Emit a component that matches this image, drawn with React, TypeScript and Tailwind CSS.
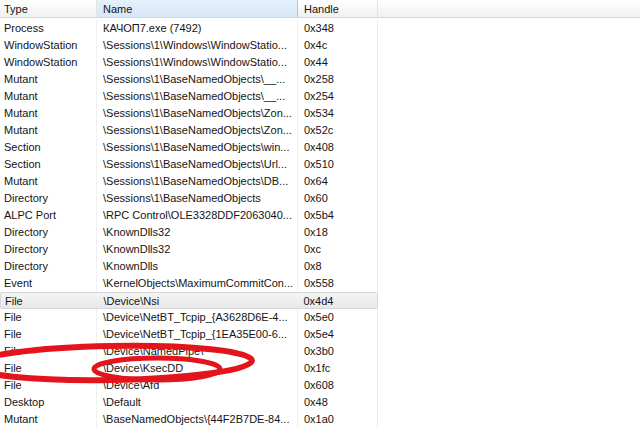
import React from "react";

const rows: [string, string, string][] = [
  ["Process", "КАЧОП7.exe (7492)", "0x348"],
  ["WindowStation", "\\Sessions\\1\\Windows\\WindowStatio...", "0x4c"],
  ["WindowStation", "\\Sessions\\1\\Windows\\WindowStatio...", "0x44"],
  ["Mutant", "\\Sessions\\1\\BaseNamedObjects\\__...", "0x258"],
  ["Mutant", "\\Sessions\\1\\BaseNamedObjects\\__...", "0x254"],
  ["Mutant", "\\Sessions\\1\\BaseNamedObjects\\Zon...", "0x534"],
  ["Mutant", "\\Sessions\\1\\BaseNamedObjects\\Zon...", "0x52c"],
  ["Section", "\\Sessions\\1\\BaseNamedObjects\\win...", "0x408"],
  ["Section", "\\Sessions\\1\\BaseNamedObjects\\Url...", "0x510"],
  ["Mutant", "\\Sessions\\1\\BaseNamedObjects\\DB...", "0x64"],
  ["Directory", "\\Sessions\\1\\BaseNamedObjects", "0x60"],
  ["ALPC Port", "\\RPC Control\\OLE3328DDF2063040...", "0x5b4"],
  ["Directory", "\\KnownDlls32", "0x18"],
  ["Directory", "\\KnownDlls32", "0xc"],
  ["Directory", "\\KnownDlls", "0x8"],
  ["Event", "\\KernelObjects\\MaximumCommitCon...", "0x558"],
  ["File", "\\Device\\Nsi", "0x4d4"],
  ["File", "\\Device\\NetBT_Tcpip_{A3628D6E-4...", "0x5e0"],
  ["File", "\\Device\\NetBT_Tcpip_{1EA35E00-6...", "0x5e4"],
  ["File", "\\Device\\NamedPipe\\", "0x3b0"],
  ["File", "\\Device\\KsecDD", "0x1fc"],
  ["File", "\\Device\\Afd", "0x608"],
  ["Desktop", "\\Default", "0x48"],
  ["Mutant", "\\BaseNamedObjects\\{44F2B7DE-84...", "0x1a0"],
];

export default function App() {
  return (
    <div className="relative w-[640px] h-[429px] overflow-hidden bg-white text-[11px] text-[#141414] font-['Liberation_Sans',Arial,sans-serif]">
      {/* column header */}
      <div className="flex h-[18px] border-b border-[#d5d5d5] bg-gradient-to-b from-white to-[#eff0f2]">
        <div className="w-[97px] pl-[4px] leading-[18px] border-r border-[#e3e4e6]">Type</div>
        <div className="w-[201px] pl-[6px] leading-[18px] bg-gradient-to-b from-[#e6f1fb] to-[#d6e7f7] border-r border-[#a9cbe8]">
          Name
        </div>
        <div className="w-[80px] pl-[6px] leading-[18px] border-r border-[#e3e4e6]">Handle</div>
        <div className="flex-1" />
      </div>

      {/* rows */}
      <div className="pt-[2px]">
        {rows.map(([type, name, handle], i) => (
          <div
            key={i}
            className={`flex h-[17px] w-[378px] leading-[17px] ${
              i === 16 ? "bg-gradient-to-b from-[#f4f4f4] to-[#e9e9e9] border border-[#d6d6d6] rounded-[2px]" : ""
            }`}
          >
            <div className={`w-[97px] pl-[4px] whitespace-nowrap overflow-hidden ${i === 16 ? "" : "border-r border-[#f0f0f0]"}`}>
              {type}
            </div>
            <div className={`w-[201px] pl-[6px] whitespace-nowrap overflow-hidden ${i === 16 ? "" : "border-r border-[#f0f0f0]"}`}>
              {name}
            </div>
            <div className={`w-[80px] pl-[6px] whitespace-nowrap overflow-hidden ${i === 16 ? "" : "border-r border-[#ececec]"}`}>
              {handle}
            </div>
          </div>
        ))}
      </div>

      {/* hand-drawn red marks */}
      <svg className="absolute left-0 top-0 pointer-events-none" width="640" height="429">
        <ellipse cx="112" cy="363" rx="140" ry="17" fill="none" stroke="#e3141b" strokeWidth="6" transform="rotate(-1 112 363)" />
        <ellipse cx="157" cy="369" rx="63" ry="11" fill="none" stroke="#e3141b" strokeWidth="5" />
      </svg>
    </div>
  );
}
